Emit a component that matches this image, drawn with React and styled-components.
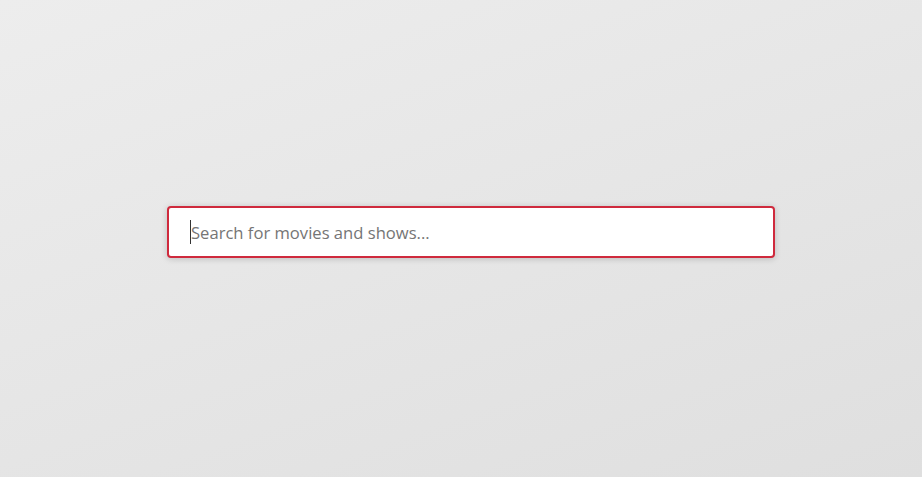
import React from 'react';
import styled, { createGlobalStyle } from 'styled-components';

const GlobalStyle = createGlobalStyle`
    html, body {
        margin: 0;
        padding: 0;
        height: 100%;
    }
    body {
        font-family: "Open Sans", "Noto Sans", sans-serif;
        background: linear-gradient(160deg, #ededed 0%, #e6e6e6 50%, #dfdfdf 100%);
        min-height: 477px;
    }
`;

const Page = styled.main`
    min-height: 477px;
    padding: 206px 0 0 167px;
    box-sizing: border-box;
`;

const SearchBox = styled.div`
    position: relative;
    width: 608px;
    height: 52px;
    box-sizing: border-box;
    background: #fff;
    border: 2px solid #cf2a3d;
    border-radius: 4px;
    box-shadow: 0 1px 6px rgba(0, 0, 0, 0.18);
    display: flex;
    align-items: center;
    padding: 0 20px 0 22px;

    &::before {
        content: "";
        position: absolute;
        left: 21px;
        top: 12px;
        width: 1px;
        height: 24px;
        background: #333;
    }
`;

const SearchInput = styled.input`
    flex: 1;
    border: none;
    outline: none;
    background: transparent;
    font-family: "Open Sans", "Noto Sans", sans-serif;
    font-size: 16.6px;
    height: 26px;
    padding: 0;
    color: #333;
    caret-color: transparent;
    ::placeholder {
        color: #8a8a8a;
    }
`;

const App = () => {
    return (
        <>
            <GlobalStyle />
            <Page>
                <SearchBox>
                    <SearchInput type="text" placeholder="Search for movies and shows..." autoFocus />
                </SearchBox>
            </Page>
        </>
    );
};

export default App;
